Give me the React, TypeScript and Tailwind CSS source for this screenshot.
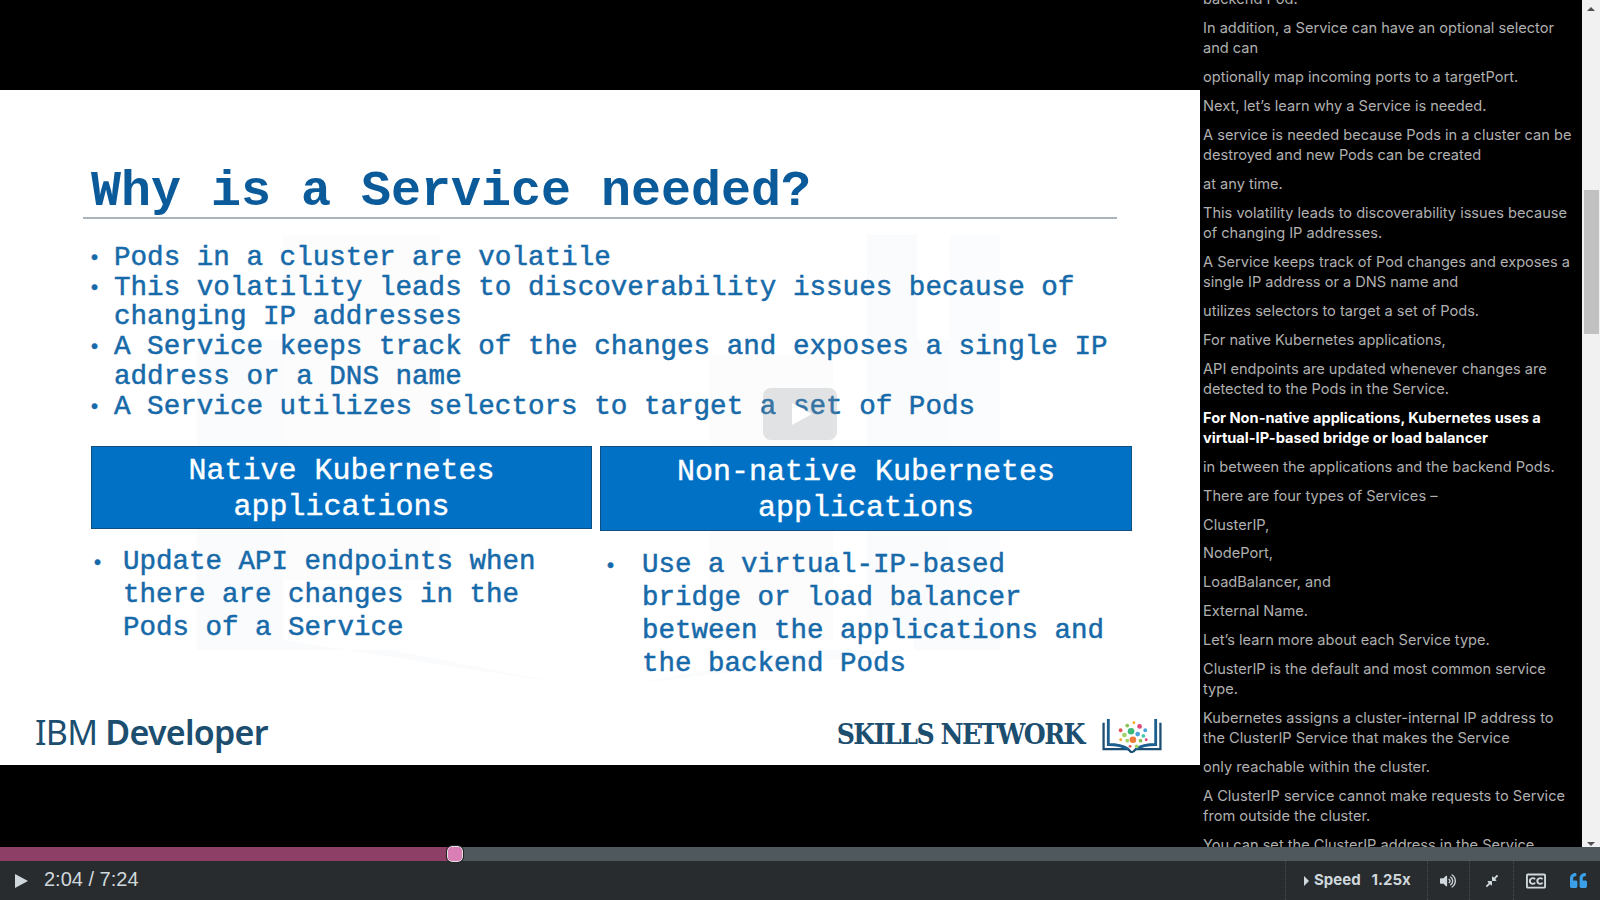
import { FaVolumeUp, FaCompressAlt, FaRegClosedCaptioning, FaQuoteLeft } from 'react-icons/fa';

const transcript = [
  { text: 'backend Pod.' },
  { text: 'In addition, a Service can have an optional selector and can' },
  { text: 'optionally map incoming ports to a targetPort.' },
  { text: 'Next, let\u2019s learn why a Service is needed.' },
  { text: 'A service is needed because Pods in a cluster can be destroyed and new Pods can be created' },
  { text: 'at any time.' },
  { text: 'This volatility leads to discoverability issues because of changing IP addresses.' },
  { text: 'A Service keeps track of Pod changes and exposes a single IP address or a DNS name and' },
  { text: 'utilizes selectors to target a set of Pods.' },
  { text: 'For native Kubernetes applications,' },
  { text: 'API endpoints are updated whenever changes are detected to the Pods in the Service.' },
  { text: 'For Non-native applications, Kubernetes uses a virtual-IP-based bridge or load balancer', current: true },
  { text: 'in between the applications and the backend Pods.' },
  { text: 'There are four types of Services \u2013' },
  { text: 'ClusterIP,' },
  { text: 'NodePort,' },
  { text: 'LoadBalancer, and' },
  { text: 'External Name.' },
  { text: 'Let\u2019s learn more about each Service type.' },
  { text: 'ClusterIP is the default and most common service type.' },
  { text: 'Kubernetes assigns a cluster-internal IP address to the ClusterIP Service that makes the Service' },
  { text: 'only reachable within the cluster.' },
  { text: 'A ClusterIP service cannot make requests to Service from outside the cluster.' },
  { text: 'You can set the ClusterIP address in the Service' },
];

function BookLogo() {
  const dots = [
    [20, 14, 2, '#e25555'], [27, 9, 2, '#8cc152'], [34, 6, 1.5, '#f6a623'], [40, 10, 2.5, '#e0457b'],
    [46, 14, 2, '#4aa3df'], [24, 19, 2.5, '#a0d468'], [31, 15, 3.5, '#3cb878'], [38, 18, 2.5, '#4aa3df'],
    [44, 20, 2, '#48c9b0'], [20, 24, 1.5, '#f6a623'], [27, 25, 2, '#a0d468'], [33, 24, 3.5, '#ee7b3a'],
    [41, 25, 2, '#8cc152'], [47, 24, 1.5, '#e0457b'], [30, 31, 1.5, '#e25555'], [37, 31, 2, '#a0d468'],
  ] as const;
  return (
    <svg width="62" height="36" viewBox="0 0 64 38" fill="none">
      <path d="M2 6v28h26l3 3h2" stroke="#1c4e73" strokeWidth="2.4" />
      <path d="M62 6v28H36l-3 3" stroke="#1c4e73" strokeWidth="2.4" />
      <path d="M7 2v27c8 0 15 1 21 5" stroke="#1c5f8e" strokeWidth="3" />
      <path d="M57 2v27c-8 0-15 1-21 5" stroke="#1c5f8e" strokeWidth="3" />
      {dots.map(([x, y, r, c], i) => (
        <circle key={i} cx={x} cy={y} r={r} fill={c} />
      ))}
    </svg>
  );
}

function Watermark() {
  return (
    <svg className="absolute left-[180px] top-[130px]" width="840" height="480" viewBox="0 0 840 480" fill="none">
      <path d="M17 120h86v300l277 43-170-33H17z" fill="#fafbfc" />
      <path d="M820 120h-86v310l-274 33 170-33h190z" fill="#fafbfc" />
      <rect x="103" y="15" width="157" height="345" fill="#fcfcfd" />
      <rect x="687" y="15" width="50" height="400" fill="#fafbfc" />
      <rect x="770" y="15" width="50" height="400" fill="#fbfcfd" />
      <rect x="530" y="135" width="123" height="285" fill="#fdfcfc" />
    </svg>
  );
}

export default function App() {
  return (
    <div className="flex h-screen w-[1600px] flex-col overflow-hidden bg-black font-['Inter',sans-serif]">
      <div className="flex h-[847px] min-h-0">
        <div className="w-[1200px] shrink-0 pt-[90px]">
          <div className="relative flex h-[675px] flex-col overflow-hidden bg-white font-['Liberation_Mono',monospace] text-[#176aa9]">
            <Watermark />
            <div className="relative mx-[83px] mt-[71px] h-[58px] border-b-2 border-[#a9b4bd] pt-[3px] pl-2 text-[50px] leading-[55px] font-bold text-[#0b5a9a]">
              Why is a Service needed?
            </div>
            <ul className="relative mt-[24px] ml-[91px] w-[1040px] text-[27.6px] leading-[29.7px] [-webkit-text-stroke:0.5px]">
              {[
                <>Pods in a cluster are volatile</>,
                <>This volatility leads to discoverability issues because of<br />changing IP addresses</>,
                <>A Service keeps track of the changes and exposes a single IP<br />address or a DNS name</>,
                <>A Service utilizes selectors to target a set of Pods</>,
              ].map((item, i) => (
                <li key={i} className="flex">
                  <span className="w-[23px] shrink-0 font-['Liberation_Sans',sans-serif] text-[20px]">•</span>
                  <span className="whitespace-nowrap">{item}</span>
                </li>
              ))}
            </ul>
            <div className="relative mt-[25px] ml-[91px] flex gap-2">
              <div className="w-[501px]">
                <div className="flex h-[83px] flex-col justify-center border border-[#0d4f80] bg-[#0071c5] pt-[2px] text-center text-[30px] leading-[36px] text-white [-webkit-text-stroke:0.4px]">
                  Native Kubernetes<br />applications
                </div>
                <div className="mt-[17px] flex text-[27.5px] leading-[32.8px] [-webkit-text-stroke:0.5px]">
                  <span className="w-[32px] shrink-0 pl-[3px] font-['Liberation_Sans',sans-serif] text-[20px]">•</span>
                  <span className="whitespace-nowrap">Update API endpoints when<br />there are changes in the<br />Pods of a Service</span>
                </div>
              </div>
              <div className="w-[532px]">
                <div className="flex h-[85px] flex-col justify-center border border-[#0d4f80] bg-[#0071c5] pt-[2px] text-center text-[30px] leading-[36px] text-white [-webkit-text-stroke:0.4px]">
                  Non-native Kubernetes<br />applications
                </div>
                <div className="mt-[18px] flex text-[27.5px] leading-[32.8px] [-webkit-text-stroke:0.5px]">
                  <span className="w-[42px] shrink-0 pl-[7px] font-['Liberation_Sans',sans-serif] text-[20px]">•</span>
                  <span className="whitespace-nowrap">Use a virtual-IP-based<br />bridge or load balancer<br />between the applications and<br />the backend Pods</span>
                </div>
              </div>
            </div>
            <div className="relative mt-auto mb-[8px] flex items-center justify-between pr-[37px] pl-[35px]">
              <div className="font-['Noto_Sans',sans-serif] text-[34px] leading-[44px] tracking-[-0.75px] text-[#1c4e6f]">
                IBM <span className="font-semibold">Developer</span>
              </div>
              <div className="mt-[6px] flex items-center gap-[17px]">
                <span className="font-['DejaVu_Serif_Condensed','DejaVu_Serif',serif] text-[28px] leading-[44px] font-bold tracking-[-1.5px] text-[#1c4e6f] [font-stretch:condensed]">SKILLS NETWORK</span>
                <BookLogo />
              </div>
            </div>
            <div className="absolute top-[298px] left-[763px] flex h-[52px] w-[74px] items-center justify-center rounded-[8px] bg-[#8a9296]/25">
              <div className="ml-1 h-0 w-0 border-y-[11px] border-l-[20px] border-y-transparent border-l-white" />
            </div>
          </div>
        </div>
        <div className="w-[382px] shrink-0 overflow-hidden pr-[10px] pl-[3px]">
          <div className="-mt-[11px] flex flex-col gap-[8.4px] text-[14.6px] leading-[20.4px] text-[#b0b0b0]">
            {transcript.map((p, i) => (
              <p key={i} className={p.current ? 'font-bold text-white' : ''}>{p.text}</p>
            ))}
          </div>
        </div>
        <div className="flex w-[18px] flex-col items-center bg-[#f1f1f1]">
          <div className="mt-[7px] h-0 w-0 border-x-[4px] border-b-[4px] border-x-transparent border-b-[#505050]" />
          <div className="mt-[179px] h-[144px] w-[15px] bg-[#c1c1c1]" />
          <div className="mt-auto mb-[1px] h-0 w-0 border-x-[4px] border-t-[4px] border-x-transparent border-t-[#505050]" />
        </div>
      </div>

      <div className="relative flex h-[14px] shrink-0 bg-[#4f585d]">
        <div className="w-[455px] bg-[#8e3f66]" />
        <div className="absolute -top-px left-[447px] h-[16px] w-[16px] rounded-[5px] border border-[#e3e3e3] bg-[#d97fb5] outline outline-[#222]" />
      </div>

      <div className="flex flex-1 items-center bg-[#292c2e] text-[#cfd8dc]">
        <div className="ml-[15px] h-0 w-0 border-y-[7.5px] border-l-[13px] border-y-transparent border-l-[#cfd8dc]" />
        <span className="mb-[4px] ml-[16px] font-['Liberation_Sans',sans-serif] text-[20px]">2:04 / 7:24</span>
        <div className="ml-auto flex h-full items-stretch text-[15px]">
          <div className="flex w-[142px] items-center border-l border-dotted border-[#4a4e50] pl-[18px] font-bold">
            <div className="h-0 w-0 border-y-[5px] border-l-[5px] border-y-transparent border-l-[#cfd8dc]" />
            <span className="ml-[5px]">Speed</span>
            <span className="ml-[11px]">1.25x</span>
          </div>
          <div className="flex w-[42px] items-center justify-center border-l border-dotted border-[#4a4e50] pr-[2px]">
            <FaVolumeUp size={16} />
          </div>
          <div className="flex w-[44px] items-center justify-center border-l border-dotted border-[#4a4e50]">
            <FaCompressAlt size={14} />
          </div>
          <div className="flex w-[45px] items-center justify-center border-l border-dotted border-[#4a4e50]">
            <FaRegClosedCaptioning size={20} />
          </div>
          <div className="flex w-[42px] items-center justify-center pr-[2px] text-[#3a9fe6]">
            <FaQuoteLeft size={17} />
          </div>
        </div>
      </div>
    </div>
  );
}
